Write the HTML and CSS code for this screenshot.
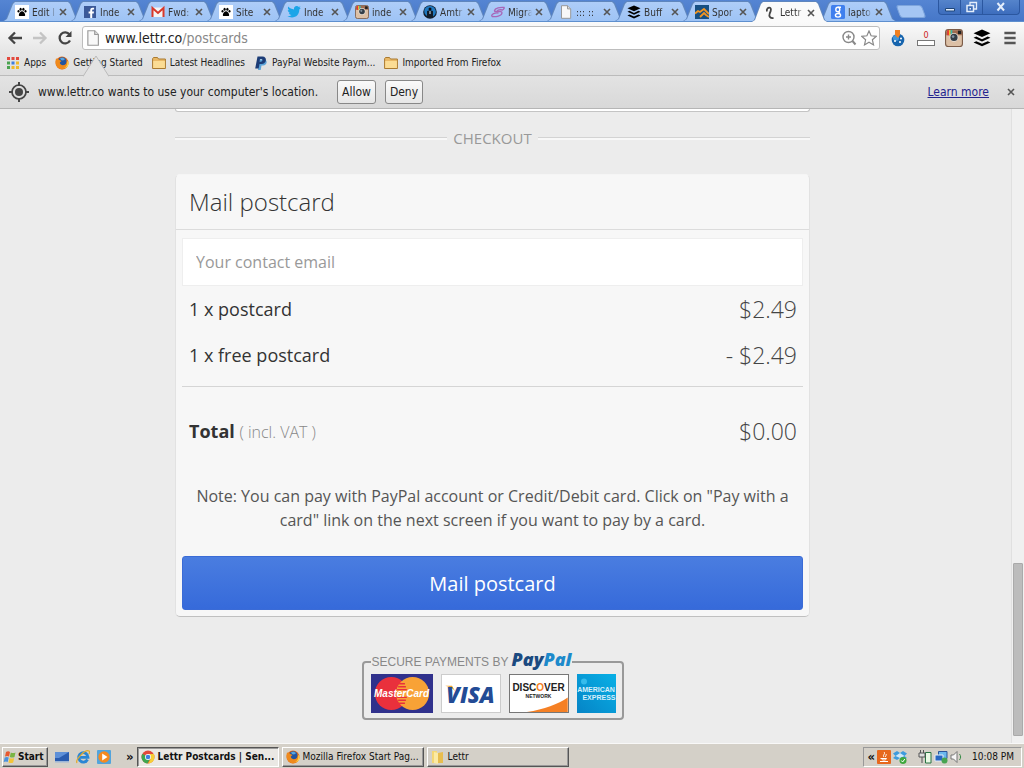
FILE: index.html
```
<!DOCTYPE html>
<html lang="en">
<head>
    <meta charset="UTF-8">
    <meta name="viewport" content="width=device-width, initial-scale=1.0">
    <title>Lettr Postcards</title>
    <link rel="stylesheet" href="styles.css">
</head>
<body>
    <!-- shared icons -->
    <svg class="sprite" aria-hidden="true">
        <symbol id="paw" viewBox="0 0 14 14">
            <rect width="14" height="14" fill="#fff"/>
            <ellipse cx="5.600" cy="4.200" rx="1.100" ry="1.500"/><ellipse cx="8.400" cy="4.200" rx="1.100" ry="1.500"/>
            <ellipse cx="3.500" cy="6.300" rx="1" ry="1.300"/><ellipse cx="10.500" cy="6.300" rx="1" ry="1.300"/>
            <path d="M7 6.200c1.400 0 3.200 2.200 3.200 3.700 0 1.400-1.400 1.300-3.200 1.100-1.800.2-3.200.3-3.200-1.100C3.800 8.400 5.600 6.200 7 6.200z"/>
        </symbol>
        <symbol id="bird" viewBox="0 0 14 14">
            <path fill="#1ba5e8" d="M13.800 3l-1.500 1.400c.2 4.400-3 8-7.300 8-1.700 0-3.400-.5-4.600-1.300 1.600.1 3-.3 4.100-1.200-1.300-.1-2.200-.9-2.600-2l1.200-.1C1.700 7.400.8 6.300.8 4.900l1.300.3C.9 4.200.6 2.700 1.300 1.500c1.500 1.700 3.400 2.700 5.700 2.900C6.600 2.500 8 1 9.700 1c.9 0 1.600.3 2.100.9L13.600 1.300l-1.200 1.500z"/>
        </symbol>
        <symbol id="insta" viewBox="0 0 16 16">
            <rect x=".5" y=".5" width="15" height="15" rx="2.500" fill="#dcc0a6" stroke="#7c5c48"/>
            <path d="M1 3a2 2 0 0 1 2-2h10a2 2 0 0 1 2 2v2.500H1z" fill="#a06b50"/>
            <path d="M2 1h1.500v4.500H2z" fill="#e33"/><path d="M3.500 1H5v4.500H3.500z" fill="#eec12d"/><path d="M5 1h1.500v4.500H5z" fill="#3bb6ac"/>
            <rect x="11.500" y="1.500" width="3" height="3" fill="#222"/>
            <circle cx="8" cy="7.500" r="4" fill="#e5dcd2"/><circle cx="8" cy="7.500" r="3.200" fill="#333d47"/><circle cx="7.200" cy="6.700" r="1.200" fill="#8392a0"/>
        </symbol>
        <symbol id="stack" viewBox="0 0 16 16">
            <path d="M8 .5l7.500 3.300L8 7.100.5 3.800z"/>
            <path d="M.5 7.800l2.400-1.100L8 9l5.100-2.300 2.400 1.100L8 11.100z"/>
            <path d="M.5 12l2.400-1.100L8 13.200l5.100-2.300 2.400 1.100L8 15.300z"/>
        </symbol>
        <symbol id="sheet" viewBox="0 0 14 14">
            <path d="M2.500.7h6l3.200 3.200v9.400H2.500z" fill="#f8f8f8" stroke="#999"/><path d="M8.500.7v3.200h3.200" fill="#ddd" stroke="#999"/>
        </symbol>
        <symbol id="folder" viewBox="0 0 14 13">
            <path d="M.6 12V2.200L1.500 1h4l1 1.500h6.900V12z" fill="#e9b866" stroke="#aa7a30"/>
            <path d="M1.200 4.500h11.700v7H1.200z" fill="#fbdc94"/>
        </symbol>
        <symbol id="firefox" viewBox="0 0 14 14">
            <circle cx="7" cy="7" r="6.500" fill="#e66a12"/><circle cx="7.300" cy="5.600" r="4.400" fill="#24559f"/>
            <path d="M5 2.200c2-1 4-.5 5 1L8 4.500 6 4z" fill="#56a6e0"/>
            <path d="M1 2.500c1 .2 2.500.6 3.500 1.500L6.500 5 4.800 6.500c.2 2.500 3 3.300 5.200 2.200 1.700-1 2-3 1.500-5 2.500 2.500 2.200 6.500-.7 8.500-3.300 2.200-8 .9-9.500-2.600C.4 7.300.4 4.500 1 2.500z" fill="#ef8a1c"/>
            <path d="M12 5c1 3-.5 6-3 7 3.500 0 5-3 4.500-6z" fill="#ffd24a"/>
        </symbol>
        <symbol id="close" viewBox="0 0 8 8"><path d="M1 1l6 6M7 1L1 7" fill="none" stroke="currentColor" stroke-width="1.600"/></symbol>
    </svg>

    <header class="browser">
        <div class="titlebar">
            <nav class="tabs">
                <a class="tab" href="#"><svg class="icon"><use href="#paw"/></svg><span>Edit I</span><svg class="x"><use href="#close"/></svg></a>
                <a class="tab" href="#"><svg class="icon" viewBox="0 0 14 14"><rect x="1" y="1" width="12" height="12" fill="#3b5998"/><path d="M7.200 13V8.500H5.600V6.600h1.600V5.200c0-1.700 1-2.500 2.500-2.500h1.400v1.900h-1c-.7 0-.9.3-.9.9v1.100H11l-.3 1.900H9.200V13z" fill="#fff"/></svg><span>Inde</span><svg class="x"><use href="#close"/></svg></a>
                <a class="tab" href="#"><svg class="icon" viewBox="0 0 14 14"><path d="M1 2.500h12v9.500H1z" fill="#f4f4f4"/><path d="M1.500 12V3L7 8l5.500-5v9" fill="none" stroke="#d8392b" stroke-width="2"/></svg><span>Fwd:</span><svg class="x"><use href="#close"/></svg></a>
                <a class="tab" href="#"><svg class="icon"><use href="#paw"/></svg><span>Site</span><svg class="x"><use href="#close"/></svg></a>
                <a class="tab" href="#"><svg class="icon"><use href="#bird"/></svg><span>Inde</span><svg class="x"><use href="#close"/></svg></a>
                <a class="tab" href="#"><svg class="icon"><use href="#insta"/></svg><span>inde</span><svg class="x"><use href="#close"/></svg></a>
                <a class="tab" href="#"><svg class="icon" viewBox="0 0 14 14"><circle cx="7" cy="7" r="6.800" fill="#111c2a"/><path d="M2 3.500a6 6 0 0 1 10.500 1.500c1 3-.5 5.500-2.500 6.500V6L8 5.500H6L4 6v5C1.500 9.500.5 6 2 3.500z" fill="#1f78c0"/><circle cx="7" cy="4" r="1.500" fill="#0a0f16"/><path d="M6.500 6h1v3h-1z" fill="#dceaf5"/></svg><span>Amtr</span><svg class="x"><use href="#close"/></svg></a>
                <a class="tab" href="#"><svg class="icon" viewBox="0 0 14 14"><g fill="none" stroke="#a866b8" stroke-width="1.300"><path d="M13.500 2.500C9 2 4 3 3.500 5.500s8-.5 7.500 2.500-6 4-10 3.500"/><path d="M12 5C9 4.500 6.500 5 6 6.200M.8 11.500C0 9 4 7.500 7.500 8M13.500 2.500L12 5"/></g></svg><span>Migra</span><svg class="x"><use href="#close"/></svg></a>
                <a class="tab" href="#"><svg class="icon"><use href="#sheet"/></svg><span>::: ::</span><svg class="x"><use href="#close"/></svg></a>
                <a class="tab" href="#"><svg class="icon"><use href="#stack"/></svg><span>Buff</span><svg class="x"><use href="#close"/></svg></a>
                <a class="tab" href="#"><svg class="icon" viewBox="0 0 14 14"><path fill="#175083" d="M0 0h14v14H0z"/><path d="M0 8.500L3 6l2 1 4-3 5 5M5 12l4-4 2 2 3 2" fill="none" stroke="#f29522" stroke-width="1.800"/></svg><span>Spor</span><svg class="x"><use href="#close"/></svg></a>
                <a class="tab active" href="#"><svg class="icon" viewBox="0 0 14 14"><path d="M4 5.500C3 3 5.500 1 7 1.800s1 3-.3 5.700c-1.200 3 .8 5 3.800 4.500" fill="none" stroke="#444" stroke-width="1.800"/></svg><span>Lettr</span><svg class="x"><use href="#close"/></svg></a>
                <a class="tab" href="#"><svg class="icon" viewBox="0 0 14 14"><rect width="14" height="14" rx="1.500" fill="#3f7fee"/><g fill="none" stroke="#fff" stroke-width="1.400"><ellipse cx="6.800" cy="4.500" rx="2" ry="2.200"/><ellipse cx="7" cy="10.300" rx="2.600" ry="1.800"/><path d="M6.800 2.300H10M7.500 6.600l1.500 2"/></g></svg><span>lapto</span><svg class="x"><use href="#close"/></svg></a>
                <button class="new-tab" aria-label="New tab"></button>
            </nav>
            <div class="window-buttons">
                <button aria-label="Minimize"><svg viewBox="0 0 14 12"><path d="M2.500 7.500h9v2.500h-9z" fill="#e4eefb" stroke="#1f4679"/></svg></button>
                <button aria-label="Restore"><svg viewBox="0 0 14 12"><path d="M5 1.500h6.500v6.500H5z" fill="none" stroke="#e4eefb" stroke-width="1.300"/><path d="M2 4.500h6.500v6H2z" fill="#3c6bb4" stroke="#e4eefb" stroke-width="1.500"/><path d="M4.500 7h1.500v1.500H4.500z" fill="#e4eefb"/></svg></button>
                <button class="wide" aria-label="Close"><svg viewBox="0 0 14 12"><path d="M3.500 2l6.500 7.500M10 2L3.500 9.500" stroke="#e4eefb" stroke-width="2"/></svg></button>
            </div>
        </div>

        <div class="toolbar">
            <button aria-label="Back"><svg viewBox="0 0 16 16"><path d="M15 8H3M8 2.500L2.500 8 8 13.500" fill="none" stroke="#444" stroke-width="2.300"/></svg></button>
            <button aria-label="Forward"><svg viewBox="0 0 16 16"><path d="M1 8h12M8 2.500L13.500 8 8 13.500" fill="none" stroke="#c4c4c4" stroke-width="2.300"/></svg></button>
            <button aria-label="Reload"><svg viewBox="0 0 16 16"><path d="M13 10.500A5.500 5.500 0 1 1 12.500 4.500" fill="none" stroke="#444" stroke-width="2.300"/><path d="M14.500 1v6h-6z" fill="#444"/></svg></button>
            <div class="address">
                <svg class="icon"><use href="#sheet"/></svg>
                <span class="url">www.lettr.co<span>/postcards</span></span>
                <svg viewBox="0 0 16 16"><g fill="none" stroke="#888" stroke-width="1.400"><circle cx="7.500" cy="7" r="5.500"/><path d="M7.500 4.500v5M5 7h5"/><path d="M11.500 11l3 3.500" stroke-width="2"/></g></svg>
                <svg viewBox="0 0 16 16"><path d="M8 1l2.100 4.800 5.200.5-3.900 3.500 1.100 5.100L8 12.300l-4.500 2.600 1.100-5.100L.7 6.300l5.200-.5z" fill="#fff" stroke="#888" stroke-width="1.200"/></svg>
            </div>
            <div class="extensions">
                <button aria-label="Cookies"><svg viewBox="0 0 16 18"><circle cx="8" cy="11" r="6.300" fill="#1765ae"/><circle cx="6" cy="9" r="3" fill="#4496d8"/><circle cx="5" cy="12" r="1" fill="#fff"/><circle cx="10" cy="13" r="1" fill="#fff"/><circle cx="11" cy="9.500" r="1" fill="#fff"/><path d="M5 1h5v5l-2 3-3-3z" fill="#f08020"/></svg></button>
                <button class="counter" aria-label="Counter"><span>0</span><i></i></button>
                <button aria-label="Instagram"><svg><use href="#insta"/></svg></button>
                <button aria-label="Buffer"><svg><use href="#stack"/></svg></button>
                <button aria-label="Menu"><svg viewBox="0 0 16 16"><path d="M3 3.500h10M3 8h10M3 12.500h10" stroke="#555" stroke-width="2.300"/></svg></button>
            </div>
        </div>

        <nav class="bookmarks">
            <a href="#"><svg viewBox="0 0 14 14"><path d="M1 1h3v3H1zM5.500 1h3v3h-3zM10 1h3v3h-3z" fill="#e2483c"/><path d="M1 5.500h3v3H1z" fill="#4aa350"/><path d="M5.500 5.500h3v3h-3z" fill="#3f7ee0"/><path d="M10 5.500h3v3h-3zM5.500 10h3v3h-3zM10 10h3v3h-3z" fill="#efb92d"/><path d="M1 10h3v3H1z" fill="#4aa350"/></svg>Apps</a>
            <a href="#"><svg><use href="#firefox"/></svg>Getting Started</a>
            <a href="#"><svg><use href="#folder"/></svg>Latest Headlines</a>
            <a href="#"><svg viewBox="0 0 14 14"><path d="M5 3.500h5c4 0 3.500 6-1 6H7.500L6.700 14H4z" fill="#5ba4d9"/><path d="M3.500.5h5c5 0 4.500 7.500-1 7.500H5.500l-.8 4.500H1.200zM6 3l-.5 2.700h1.300c2 0 2.200-2.700.5-2.700z" fill="#1c3c76" fill-rule="evenodd"/></svg>PayPal Website Paym...</a>
            <a href="#"><svg><use href="#folder"/></svg>Imported From Firefox</a>
        </nav>

        <div class="infobar">
            <svg class="pointer" viewBox="0 0 26 22"><path d="M0 22L13 1l13 21z" fill="#e3e3e3"/><path d="M0 21.500L13 1l13 20.500" fill="none" stroke="#bbb"/></svg>
            <svg class="target" viewBox="0 0 20 20"><g fill="none" stroke="#444"><circle cx="10" cy="10" r="7" stroke-width="1.700"/><path d="M10 0v4M10 16v4M0 10h4M16 10h4" stroke-width="2"/></g><circle cx="10" cy="10" r="4" fill="#444"/></svg>
            <span>www.lettr.co wants to use your computer's location.</span>
            <button>Allow</button>
            <button>Deny</button>
            <a href="#">Learn more</a>
            <button class="dismiss" aria-label="Dismiss"><svg class="x"><use href="#close"/></svg></button>
        </div>
    </header>

    <div class="viewport">
        <main class="page">
            <div class="previous-card"></div>
            <h2 class="section-title">CHECKOUT</h2>
            <form class="card">
                <h1>Mail postcard</h1>
                <div class="card-body">
                    <input type="email" aria-label="Your contact email" placeholder="Your contact email">
                    <dl class="prices">
                        <div><dt>1 x postcard</dt><dd>$2.49</dd></div>
                        <div><dt>1 x free postcard</dt><dd>- $2.49</dd></div>
                        <div class="total"><dt><strong>Total</strong> <small>( incl. VAT )</small></dt><dd>$0.00</dd></div>
                    </dl>
                    <p>Note: You can pay with PayPal account or Credit/Debit card. Click on "Pay with a card" link on the next screen if you want to pay by a card.</p>
                    <button class="submit" type="button">Mail postcard</button>
                </div>
            </form>

            <fieldset class="payments">
                <legend>SECURE PAYMENTS BY <b>Pay<i>Pal</i></b></legend>
                <div class="pay-card mastercard"><svg viewBox="0 0 62 38"><circle cx="20" cy="19" r="17" fill="#e9303c"/><circle cx="42" cy="19" r="17" fill="#f8a236"/><path d="M28 9h6M27 12h8M26 15h10M26 23h10M27 26h8M28 29h6" stroke="#e9303c" stroke-width="1.500"/></svg><span>MasterCard</span></div>
                <div class="pay-card visa"><svg viewBox="0 0 59 38"><path d="M3 11h7l4 7c-2-4-6-6-11-7z" fill="#f0a22e"/></svg><span>VISA</span></div>
                <div class="pay-card discover"><svg viewBox="0 0 59 38"><path d="M59 23v15H17c18-3 32-8 42-15z" fill="#f58025"/></svg><span>DISC<em>O</em>VER</span><small>NETWORK</small></div>
                <div class="pay-card amex"><svg viewBox="0 0 39 38"><circle cx="7" cy="7" r="3" fill="#35bcec"/></svg><span>AMERICAN</span><span class="second">EXPRESS</span></div>
            </fieldset>
        </main>
        <div class="scrollbar"><div class="thumb"></div></div>
    </div>

    <footer class="taskbar">
        <button class="start"><svg viewBox="0 0 14 14"><path d="M3 2c1.500-1 3-.8 4 0L6 6.500c-1.200-.8-2.500-.8-4 0z" fill="#e7592f"/><path d="M7.800 2.500c1.500.8 3 .8 4.700 0L11.500 7c-1.500.8-3 .8-4.700 0z" fill="#79b543"/><path d="M1.700 7.500c1.500-.8 2.800-.8 4 0l-1 4.500c-1.200-.8-2.500-.8-4 0z" fill="#4a91dc"/><path d="M6.500 8c1.500.8 3 .8 4.700 0l-1 4.500c-1.500.8-3 .8-4.700 0z" fill="#f4c436"/></svg>Start</button>
        <div class="quick">
            <svg viewBox="0 0 14 14"><path d="M0 2h14v9H0z" fill="#2a5caf"/><path d="M0 2h14L4 8H0z" fill="#5e90d8"/><path d="M0 11h14v1.500H0z" fill="#9eb6d6"/></svg>
            <svg viewBox="0 0 14 14"><path d="M11.500 9.500A4.700 4.700 0 1 1 12 7.300H4" fill="none" stroke="#2a86d4" stroke-width="2.800"/><path d="M1 13C-1 10 9-1 13 1c1 .6.500 2 0 3" fill="none" stroke="#e3ab2c" stroke-width="1.300"/></svg>
            <svg viewBox="0 0 14 14"><rect width="14" height="14" rx="1" fill="#52a4dc"/><circle cx="7" cy="7" r="5.700" fill="#f58a20"/><path d="M5.200 3.500L10.500 7l-5.300 3.500z" fill="#fff"/></svg>
        </div>
        <span class="more">»</span>
        <button class="task current"><svg viewBox="0 0 14 14"><circle cx="7" cy="7" r="6.500" fill="#e24b3b"/><path d="M7 7L1.400 3.700A6.500 6.500 0 0 0 6.500 13.500L9 9z" fill="#3ea750"/><path d="M7 13.500A6.500 6.500 0 0 0 12.800 4H7l2.500 5z" fill="#f7cf36"/><circle cx="7" cy="7" r="3" fill="#fff"/><circle cx="7" cy="7" r="2.300" fill="#3f80df"/></svg><span>Lettr Postcards | Sen...</span></button>
        <button class="task"><svg><use href="#firefox"/></svg><span>Mozilla Firefox Start Pag...</span></button>
        <button class="task"><svg viewBox="0 0 14 14"><path d="M1 1h5v12H1z" fill="#f4d774"/><path d="M7 3l5-1v11H7z" fill="#e8bd4e"/><path d="M3 2l4 1v11l-4-1z" fill="#fbeaa5"/></svg><span>Lettr</span></button>
        <div class="tray">
            <span class="more">«</span>
            <svg viewBox="0 0 14 14"><rect width="14" height="14" rx="1" fill="#e7681d"/><path d="M7 2c2 2-2 3 0 5M9 4c1 1-1 2-.5 3M3.500 8.500h6c0 2-5 2-5 0M3 11.500h8" fill="none" stroke="#fff"/></svg>
            <svg viewBox="0 0 14 14"><path d="M4 1l3 2 3-2 4 2.500L11.500 6 14 8l-4 2-3-2-3 2-4-2 2.500-2L0 3.500z" fill="#3d9bdd"/><path d="M7 3l4.500 3L7 8 2.500 6z" fill="#cfe8f8"/><circle cx="10" cy="10.500" r="3.500" fill="#3da83d"/><path d="M8.300 10.500l1.300 1.500 2.200-3" fill="none" stroke="#fff"/></svg>
            <svg class="spaced" viewBox="0 0 14 14"><path d="M7.500 2.500H13V13H7.500z" fill="#e9f7e3" stroke="#267342"/><path d="M1 3h6v4H1zM2.500 0v3M5.500 0v3M4 7v6" fill="#ddd" stroke="#555"/></svg>
            <svg viewBox="0 0 14 14"><path d="M4.500 1.500H13v7H4.500z" fill="#6bb8ee" stroke="#2b549b"/><path d="M1 5h8v6H1z" fill="#2867c2" stroke="#e4edf8"/><circle cx="10.500" cy="10.500" r="3" fill="#47a451"/></svg>
            <svg viewBox="0 0 14 14"><path d="M1 5h2.500L7 1.500v11L3.500 9H1z" fill="#f6f6f6" stroke="#777"/><path d="M9.500 4c1.500 2 1.500 4 0 6" fill="none" stroke="#388b46"/></svg>
            <time>10:08 PM</time>
        </div>
    </footer>
</body>
</html>
```
FILE: styles.css
```
* {
    box-sizing: border-box;
}
body {
    display: flex;
    flex-direction: column;
    height: 100vh;
    margin: 0;
    overflow: hidden;
    background-color: #ececec;
    font-family: "DejaVu Sans Condensed", "DejaVu Sans", Tahoma, sans-serif;
    font-stretch: condensed;
    font-size: 10px;
    color: #222;
}
a {
    color: inherit;
    text-decoration: none;
}
button {
    font-family: inherit;
    font-size: inherit;
    color: inherit;
    padding: 0;
    border: none;
    background: none;
}
svg {
    display: block;
    flex: none;
    width: 14px;
    height: 14px;
}
.sprite {
    position: absolute;
    width: 0;
    height: 0;
}

/* tab strip */
.browser {
    flex: none;
}
.titlebar {
    display: flex;
    justify-content: space-between;
    height: 22px;
    background: linear-gradient(#5585d3, #4677c8);
    border-bottom: 1px solid #5e8fce;
}
.tabs {
    display: flex;
    padding: 1px 0 0 3px;
}
.tab {
    position: relative;
    z-index: 0;
    display: flex;
    align-items: center;
    width: 77px;
    height: 20px;
    margin-right: -9px;
    padding: 2px 13px 0 12px;
    gap: 3px;
}
.tab::before,
.tab::after {
    content: "";
    position: absolute;
    z-index: -1;
    inset: 0;
    clip-path: polygon(0 100%, 3px 90%, 9px 10%, 12px 0, 65px 0, 68px 10%, 74px 90%, 100% 100%);
    background-color: #5f86bd;
}
.tab::after {
    inset: 1px 1px 0;
    background: linear-gradient(#aecdf8, #9ec3f5);
    clip-path: polygon(0 100%, 3px 90%, 9px 10%, 11px 0, 64px 0, 66px 10%, 72px 90%, 100% 100%);
}
.tab.active {
    z-index: 1;
    height: 21px;
}
.tab.active::after {
    background: #fafafa;
}
.tab span {
    flex: 1;
    overflow: hidden;
    white-space: nowrap;
    color: #333;
    mask-image: linear-gradient(to right, #000 70%, transparent);
}
.x {
    width: 8px;
    height: 8px;
    color: #555;
}
.new-tab {
    width: 26px;
    height: 13px;
    margin: 4px 0 0 11px;
    border: 1px solid #7ea5dc;
    border-radius: 3px;
    background-color: #a5c6f4;
    transform: skewX(20deg);
}
.window-buttons {
    display: flex;
    height: 15px;
    margin-right: 4px;
    border: 1px solid #2b57a0;
    border-top: none;
    border-radius: 0 0 4px 4px;
    background: linear-gradient(#5584cb, #3d6dbd);
}
.window-buttons button {
    display: grid;
    place-items: center;
    width: 22px;
    border-right: 1px solid #2b57a0;
}
.window-buttons .wide {
    width: 36px;
    border: none;
}
.window-buttons svg {
    height: 12px;
}

/* toolbar */
.toolbar {
    display: flex;
    align-items: center;
    gap: 9px;
    height: 30px;
    padding: 2px 5px 0 7px;
    background: linear-gradient(#fafafa, #e6e6e6);
}
.toolbar svg {
    width: 16px;
    height: 16px;
}
.address {
    flex: 1;
    display: flex;
    align-items: center;
    gap: 4px;
    height: 24px;
    padding: 0 2px;
    border: 1px solid #bdbdbd;
    border-radius: 3px;
    background-color: white;
}
.url {
    flex: 1;
    font-size: 14px;
}
.url span {
    color: #888;
}
.extensions {
    display: flex;
    align-items: center;
    gap: 10px;
}
.extensions svg {
    width: 18px;
    height: 18px;
}
.extensions .counter {
    width: 18px;
    font-size: 9px;
    line-height: 10px;
    color: #c22;
}
.counter span,
.counter i {
    display: block;
}
.counter i {
    height: 6px;
    border: 1px solid #777;
    background-color: white;
}

/* bookmarks */
.bookmarks {
    display: flex;
    align-items: center;
    gap: 9px;
    height: 24px;
    padding: 0 6px 2px;
    border-bottom: 1px solid #bbb;
    background: linear-gradient(#e6e6e6, #dedede);
}
.bookmarks a {
    display: flex;
    align-items: center;
    gap: 4px;
}

/* location request */
.infobar {
    position: relative;
    display: flex;
    align-items: center;
    gap: 9px;
    height: 33px;
    padding: 0 5px 0 9px;
    border-bottom: 1px solid #b5b5b5;
    background: linear-gradient(#e3e3e3, #d8d8d8);
    font-size: 12px;
}
.infobar .pointer {
    position: absolute;
    left: 83px;
    bottom: 100%;
    width: 26px;
    height: 22px;
    margin-bottom: -1px;
}
.infobar .target {
    width: 20px;
    height: 20px;
}
.infobar span {
    margin-right: 10px;
}
.infobar button {
    height: 24px;
    padding: 0 4px;
    border: 1px solid #888;
    border-radius: 3px;
    background: linear-gradient(#fafafa, #e6e6e6);
}
.infobar a {
    margin-left: auto;
    color: #23238e;
    text-decoration: underline;
}
.infobar .dismiss {
    height: auto;
    margin-left: 5px;
    border: none;
    background: none;
}

/* page */
.viewport {
    display: flex;
    flex: 1;
    min-height: 0;
    font-family: "Open Sans", sans-serif;
    font-stretch: normal;
}
.page {
    flex: 1;
    min-width: 0;
    padding-right: 26px;
    overflow: hidden;
}
.previous-card,
.section-title,
.card {
    width: 100%;
    max-width: 635px;
    margin: 0 auto;
}
.previous-card {
    height: 3px;
    border: 1px solid #c4c4c4;
    border-top: none;
    border-radius: 0 0 5px 5px;
    background-color: white;
}
.section-title {
    display: flex;
    align-items: center;
    gap: 6px;
    margin-top: 14px;
    font-size: 15px;
    line-height: 24px;
    font-weight: 400;
    color: #999;
}
.section-title::before,
.section-title::after {
    content: "";
    flex: 1;
    height: 2px;
    border-top: 1px solid #d3d3d3;
    background-color: #f8f8f8;
}
.card {
    margin-top: 24px;
    border: 1px solid #e2e2e2;
    border-top-color: #f5f5f5;
    border-bottom-color: #c0c0c0;
    border-radius: 5px;
    background-color: #f7f7f7;
}
.card h1 {
    margin: 0;
    padding: 0 13px;
    border-bottom: 1px solid #dcdcdc;
    font-size: 24px;
    line-height: 54px;
    font-weight: 300;
    color: #333;
}
.card-body {
    padding: 8px 6px 6px;
}
.card input {
    display: block;
    width: 100%;
    height: 48px;
    padding: 0 13px;
    border: 1px solid #eee;
    background-color: white;
    font-family: inherit;
    font-size: 16px;
}
.card input::placeholder {
    color: #999;
}
.prices {
    margin: 0;
}
.prices div {
    display: flex;
    justify-content: space-between;
    align-items: center;
    height: 46px;
    padding: 0 6px 0 7px;
}
.prices dt {
    font-size: 18px;
    color: #333;
}
.prices dd {
    margin: 0;
    font-size: 23px;
    font-weight: 300;
    color: #444;
}
.prices .total {
    height: 88px;
    margin-top: 8px;
    border-top: 1px solid #d5d5d5;
}
.prices small {
    font-size: 16px;
    font-weight: 300;
    color: #888;
}
.card p {
    margin: 10px 6px 24px;
    font-size: 16px;
    line-height: 24px;
    text-align: center;
    color: #555;
}
.submit {
    display: block;
    width: 100%;
    height: 54px;
    border: 1px solid #3a6bd6;
    border-radius: 3px;
    background: linear-gradient(#4a7de0, #366ada);
    font-size: 20px;
    color: white;
}

/* payment methods */
.payments {
    display: flex;
    gap: 8px;
    width: 262px;
    height: 69px;
    margin: 34px auto 0;
    padding: 2px 0 4px 7px;
    border: 2px solid #999;
    border-radius: 4px;
    font-family: "Liberation Sans", sans-serif;
}
.payments legend {
    padding: 0 1px;
    font-size: 12px;
    line-height: 20px;
    color: #888;
}
.payments b {
    font-family: "Open Sans", sans-serif;
    font-weight: 800;
    font-style: italic;
    font-size: 18px;
    line-height: 16px;
    color: #1b4a80;
}
.payments b i {
    color: #1d8acb;
}
.pay-card {
    position: relative;
    display: flex;
    flex-direction: column;
    align-items: center;
    justify-content: center;
    width: 60px;
    height: 39px;
    border: 1px solid #ccc;
    background-color: white;
    font-weight: bold;
    line-height: 10px;
}
.pay-card svg {
    position: absolute;
    inset: 0;
    width: 100%;
    height: 100%;
}
.pay-card span,
.pay-card small {
    position: relative;
}
.mastercard {
    width: 62px;
    border-color: #30318c;
    background-color: #30318c;
    font-size: 10px;
    font-style: italic;
    color: white;
}
.visa {
    font-family: "Open Sans", sans-serif;
    font-size: 22px;
    font-weight: 800;
    font-style: italic;
    color: #234b95;
}
.discover {
    justify-content: flex-start;
    padding-top: 8px;
    border-color: #777;
    font-size: 10px;
    color: #222;
}
.discover em {
    font-style: normal;
    color: #f58025;
}
.discover small {
    font-size: 5px;
    line-height: 6px;
}
.amex {
    width: 39px;
    border: none;
    background: linear-gradient(to bottom left, #08b0e6, #0684c6);
    font-size: 7px;
    line-height: 8px;
    color: #d5effb;
}
.amex .second {
    align-self: flex-end;
}

.scrollbar {
    display: flex;
    flex-direction: column;
    justify-content: flex-end;
    width: 13px;
    padding: 0 1px 7px;
    border-left: 1px solid #e0e0e0;
    background-color: #f0f0f0;
}
.thumb {
    height: 173px;
    border: 1px solid #aaa;
    border-radius: 1px;
    background-color: #bcbcbc;
}

/* taskbar */
.taskbar {
    flex: none;
    display: flex;
    align-items: center;
    gap: 3px;
    height: 25px;
    padding: 2px 2px 1px;
    border-top: 1px solid #f8f8f8;
    background-color: #d4d0c8;
    color: #111;
}
.taskbar button {
    display: flex;
    align-items: center;
    height: 20px;
    border: 1px solid;
    border-color: #fff #555 #555 #fff;
    box-shadow: inset -1px -1px #999;
    background-color: #d4d0c8;
}
.start {
    gap: 1px;
    width: 46px;
    font-weight: bold;
}
.quick {
    display: flex;
    gap: 7px;
    margin: 0 12px 0 4px;
}
.more {
    font-size: 13px;
    line-height: 14px;
    font-weight: bold;
}
.taskbar .task {
    flex: 0 1 142px;
    gap: 3px;
    min-width: 0;
    padding: 0 3px;
    overflow: hidden;
    white-space: nowrap;
}
.taskbar .current {
    border-color: #555 #fff #fff #555;
    box-shadow: inset 1px 1px #999;
    background-color: #eae8e4;
    font-weight: bold;
}
.tray {
    display: flex;
    align-items: center;
    gap: 2px;
    height: 20px;
    margin-left: auto;
    padding: 0 7px 0 3px;
    border: 1px solid;
    border-color: #999 #fff #fff #999;
}
.tray .spaced {
    margin-left: 9px;
}
.tray time {
    margin-left: 6px;
}
```
